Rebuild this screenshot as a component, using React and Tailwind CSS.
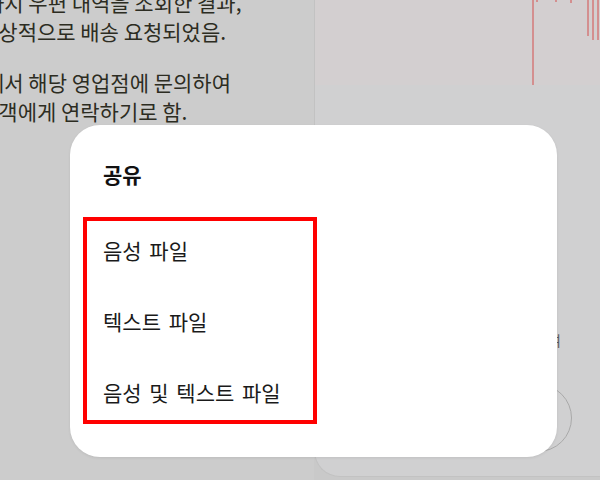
import React from "react";

const font = { fontFamily: '"Noto Sans CJK KR", "Noto Sans", sans-serif' };

function Chart() {
  return (
    <svg width="286" height="85" viewBox="0 0 286 85" className="block">
      <rect x="0" y="0" width="286" height="85" fill="#d3cfd0" />
      <g stroke="#d48484" strokeWidth="1.7">
        <line x1="218" y1="0" x2="218" y2="85" />
        <line x1="273" y1="0" x2="273" y2="36" />
        <line x1="278" y1="0" x2="278" y2="40" />
        <line x1="283" y1="0" x2="283" y2="40" />
        <line x1="222" y1="0" x2="222" y2="2" />
        <line x1="241" y1="0" x2="241" y2="2" />
        <line x1="256" y1="0" x2="256" y2="3" />
      </g>
    </svg>
  );
}

export default function App() {
  return (
    <div
      className="relative w-[600px] h-[480px] overflow-hidden bg-[#c9c9c9] flex"
      style={font}
    >
      {/* Left text area */}
      <div className="w-[314px] h-full bg-[#cccccc] overflow-hidden">
        <div className="-mt-[12px] text-[21px] leading-[29px] text-[#2c2c22] whitespace-nowrap">
          <p className="-ml-[15px]">까지 우편 내역을 조회한 결과,</p>
          <p className="-ml-[21px]">정상적으로 배송 요청되었음.</p>
          <p className="mt-[22px] -ml-[15px]">에서 해당 영업점에 문의하여</p>
          <p className="-ml-[21px]">고객에게 연락하기로 함.</p>
        </div>
      </div>

      {/* Right panel */}
      <div className="flex-1 h-[477px] bg-[#d0d0d1] border-l border-b border-[#c2c2c2] rounded-bl-[26px] flex flex-col overflow-hidden">
        <Chart />
        <div className="self-end mr-[39px] mt-[245px] text-[14px] leading-[20px] text-[#5a5a5a]">
          여
        </div>
        <div className="self-end mr-[28px] mt-[34px] w-[68px] h-[68px] rounded-full border border-[#a9a9a9]" />
      </div>

      {/* Share dialog */}
      <div className="absolute left-[70px] top-[125px] w-[487px] h-[332px] bg-white rounded-[30px] pt-[35px] pl-[13px] shadow-[0_1px_3px_rgba(0,0,0,0.08)]">
        <div className="pl-[20px] text-[21px] leading-[28px] font-bold text-[#111111]">
          공유
        </div>
        <div className="mt-[29px] w-[234px] border-[4px] border-[#ff0000] pt-[15px] pb-[14px] pl-[16px] flex flex-col gap-[43px] text-[21px] leading-[28px] text-[#1a1a1a] [word-spacing:3px]">
          <div>음성 파일</div>
          <div>텍스트 파일</div>
          <div>음성 및 텍스트 파일</div>
        </div>
      </div>
    </div>
  );
}
